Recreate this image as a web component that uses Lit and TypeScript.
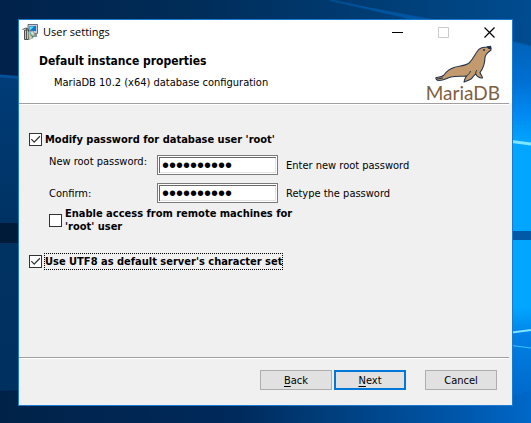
import { LitElement, html, css, svg } from "lit";
import { customElement } from "lit/decorators.js";

/** Blue desktop with light beams from a window on the right. */
const wallpaper = html`
  <svg class="wallpaper" viewBox="0 0 531 423" preserveAspectRatio="none" aria-hidden="true">
    <defs>
      <linearGradient id="top" x1="0" x2="1" y1="0" y2="0">
        <stop offset="0" stop-color="#00224a" />
        <stop offset="0.35" stop-color="#002c58" />
        <stop offset="0.75" stop-color="#003f78" />
        <stop offset="1" stop-color="#004c90" />
      </linearGradient>
      <linearGradient id="bottom" x1="0" x2="1" y1="0" y2="0">
        <stop offset="0" stop-color="#002248" />
        <stop offset="0.45" stop-color="#002a5c" />
        <stop offset="0.6" stop-color="#003c78" />
        <stop offset="0.85" stop-color="#0055a8" />
        <stop offset="1" stop-color="#0068c8" />
      </linearGradient>
      <linearGradient id="left" x1="0" x2="0" y1="0" y2="1">
        <stop offset="0" stop-color="#003c78" />
        <stop offset="0.5" stop-color="#003262" />
        <stop offset="1" stop-color="#003060" />
      </linearGradient>
      <linearGradient id="right" x1="0" x2="0" y1="0" y2="1">
        <stop offset="0" stop-color="#004c90" />
        <stop offset="0.1" stop-color="#0062b8" />
        <stop offset="0.2" stop-color="#006fd2" />
        <stop offset="0.28" stop-color="#0088f0" />
        <stop offset="0.36" stop-color="#00a6ff" />
        <stop offset="0.77" stop-color="#00a6ff" />
        <stop offset="0.84" stop-color="#0080e6" />
        <stop offset="1" stop-color="#0068c8" />
      </linearGradient>
    </defs>
    <rect width="531" height="211" fill="url(#top)" />
    <rect y="211" width="531" height="212" fill="url(#bottom)" />
    <path d="M0 76 L100 84 V385 L0 391Z" fill="url(#left)" />
    <path d="M0 76 L100 84" stroke="#00509a" stroke-width="3" />
    <path d="M330 0 L531 46 V390 L500 400 V32Z" fill="url(#right)" />
    <path d="M330 0 L531 46" stroke="#005faf" stroke-width="2" opacity="0.5" />
    <path d="M500 128 L531 125" stroke="#009cf0" stroke-width="1" />
    <path d="M500 140 L531 144" stroke="#7fe6ff" stroke-width="3" />
    <path d="M500 334 L531 330" stroke="#7fe6ff" stroke-width="2" />
    <path d="M500 344 L531 348" stroke="#38c4ff" stroke-width="1" />
    <path d="M0 223 H40 V243 H0Z" fill="#001b3a" />
    <path d="M500 231 H531 V240 H500Z" fill="#005aa8" />
  </svg>
`;

const installerIcon = html`
  <svg class="app-icon" viewBox="0 0 16 16" aria-hidden="true">
    <path d="M6 0.5H15.5V9.5H12L6 8Z" fill="#c3cbd6" stroke="#66707e" />
    <path d="M7.5 2H14V7H7.5Z" fill="#0b78cf" />
    <path d="M8 2.5H12L8 6.5Z" fill="#65d6f5" />
    <path d="M10 9.5H15V13H11Z" fill="#8b929c" />
    <path d="M2.500 6H6.500V15.500H2.500Z" fill="#c4c4b8" stroke="#4e5050" />
    <path d="M0.500 5.500L4 4L7 5.500M4.500 4V15" fill="none" stroke="#55574f" />
    <path d="M6.500 8L11 7L12.500 10L11 14L7 15.500Z" fill="#d5ddcf" stroke="#8a9086" stroke-width="0.7" />
    <path d="M9 11L7 9L9 8Z" fill="#49b7a9" />
    <path d="M9 11L12 12L10 14Z" fill="#358f70" />
    <path d="M9 11L7 13L8 14.500Z" fill="#e1c74c" />
    <circle cx="9" cy="11" r="0.8" fill="#fff" stroke="#555" stroke-width="0.5" />
  </svg>
`;

const seaLion = html`
  <svg class="sea-lion" viewBox="0 0 58 38" aria-hidden="true">
    <path
      d="M2 32.500C4 32 7 32.500 9.500 30.500C12 27 15 24 20 22.500C25 21 31 21 35 18C39 14.500 40.500 10 43.500 6C45.500 3 48.500 2 52 2.200L56.500 1.500L57 5C54.500 7 51.500 8.500 51 12.500C50.800 18 49.500 23 46 27.500C46.500 29.500 48.500 31 48.500 33C46 33.300 43.500 32 41.800 29.300C40 29.500 39.500 32 37 34C35 35.300 32.500 36 30 37C30.300 34.500 31.500 32.500 32.500 31C27 31.500 22 31 17 32C13 33 10 35.500 5 35.500C2.500 35.500 1.500 33.500 2 32.500Z"
      fill="#c39a6d"
      stroke="#26354a"
      stroke-width="1.100"
      stroke-linejoin="round"
    />
    <path d="M52.500 1.500L57 0.800L57.500 4L54.500 4Z" fill="#1f3048" />
    <circle cx="50" cy="5" r="0.9" fill="#1f2430" />
    <path d="M32.500 31C34.500 29.500 36 28 36.500 26M41.800 29.300C41.500 27.500 42 26 43 25M3 34L9 33" fill="none" stroke="#26354a" />
  </svg>
`;

const glyph = (shape: unknown) =>
  html`<svg width="11" height="11" viewBox="0 0 11 11" fill="none" stroke="currentColor" aria-hidden="true">${shape}</svg>`;

@customElement("app-root")
export class AppRoot extends LitElement {
  static styles = css`
    :host {
      display: grid;
      position: relative;
      box-sizing: border-box;
      min-height: 100vh;
      padding: 19px 18px 17px;
      overflow: hidden;
      background: #002c58;
      color: #000;
      font: 11px/13px "DejaVu Sans Condensed", Tahoma, sans-serif;
    }
    * {
      box-sizing: border-box;
    }
    .wallpaper {
      position: absolute;
      inset: 0;
      width: 100%;
      height: 100%;
    }
    .window {
      position: relative;
      display: flex;
      flex-direction: column;
      border: 1px solid #1a7ad2;
      background: #f0f0f0;
    }
    .banner {
      background: #fff;
    }
    .titlebar {
      display: flex;
      align-items: center;
      height: 24px;
      padding-left: 3px;
      gap: 5px;
      font: 11px/16px "Open Sans", "Segoe UI", sans-serif;
    }
    .app-icon {
      width: 16px;
      height: 16px;
    }
    .title {
      flex: 1;
    }
    .controls {
      display: flex;
    }
    .control {
      display: grid;
      place-items: center;
      width: 46px;
      height: 24px;
      padding: 0;
      border: 0;
      background: none;
      color: #000;
    }
    .control:disabled {
      color: #ccc;
    }
    .heading {
      display: flex;
      justify-content: space-between;
      height: 59px;
      padding: 0 12px 0 20px;
    }
    h1 {
      margin: 10px 0 7px;
      font-size: 12px;
      line-height: 15px;
    }
    .subtitle {
      margin: 0 0 0 15px;
    }
    .logo {
      display: flex;
      flex-direction: column;
      align-items: center;
      padding-top: 1px;
      color: #80603f;
      font: 400 19px/20px Lato, sans-serif;
    }
    .sea-lion {
      width: 58px;
      height: 38px;
    }
    .rule {
      height: 2px;
      margin: 0 3px 0 0;
      border: 0;
      border-top: 1px solid #a0a0a0;
      border-bottom: 1px solid #fff;
    }
    .form {
      flex: 1;
      padding: 26px 10px;
    }
    .check {
      display: flex;
      align-items: center;
      gap: 2px;
      width: fit-content;
      font-weight: bold;
    }
    .check label {
      padding: 1px 0;
      border: 1px dotted transparent;
    }
    .check label.focused {
      border-color: #000;
    }
    .box {
      appearance: none;
      display: grid;
      flex: none;
      width: 13px;
      height: 13px;
      margin: 0;
      border: 1px solid #333;
      background: #fff;
    }
    .box:checked::before {
      content: "";
      background: #333;
      clip-path: polygon(8% 51%, 16% 43%, 38% 65%, 86% 16%, 94% 25%, 38% 81%);
    }
    .remote {
      margin: 3px 0 19px 20px;
    }
    .remote label {
      max-width: 240px;
      padding: 0;
    }
    .fields {
      display: grid;
      grid-template-columns: 108px 121px 1fr;
      row-gap: 8px;
      align-items: center;
      padding: 7px 0 0 20px;
    }
    .fields label:first-child {
      align-self: start;
    }
    .password {
      width: 100%;
      height: 20px;
      padding: 0 4px;
      border: 1px solid #7a7a7a;
      outline: 0;
      background: #fff;
      box-shadow: inset 0 0 0 1px #fff, inset 2px 2px 0 #696969, inset -2px -2px 0 #e3e3e3;
      color: #000;
      font: 20px/16px "Liberation Sans", sans-serif;
    }
    .hint {
      padding-left: 8px;
    }
    .footer {
      display: flex;
      justify-content: flex-end;
      gap: 2px;
      padding: 11px 15px 15px;
    }
    .button {
      width: 72px;
      height: 20px;
      padding: 0;
      border: 1px solid #adadad;
      background: #e1e1e1;
      color: #000;
      font: inherit;
    }
    .button.primary {
      border: 2px solid #0078d7;
    }
    .button.cancel {
      margin-left: 17px;
    }
    u {
      text-underline-offset: 2px;
    }
  `;

  render() {
    return html`
      ${wallpaper}
      <main class="window">
        <header class="banner">
          <div class="titlebar">
            ${installerIcon}
            <span class="title">User settings</span>
            <div class="controls">
              <button class="control" aria-label="Minimize">${glyph(svg`<path d="M0 5.5H11" />`)}</button>
              <button class="control" aria-label="Maximize" disabled>
                ${glyph(svg`<path d="M0.5 0.5H10.5V10.5H0.5Z" />`)}
              </button>
              <button class="control" aria-label="Close">${glyph(svg`<path d="M0.5 0.5L10.5 10.5M10.5 0.5L0.5 10.5" stroke-width="1.2" />`)}</button>
            </div>
          </div>
          <div class="heading">
            <div>
              <h1>Default instance properties</h1>
              <p class="subtitle">MariaDB 10.2 (x64) database configuration</p>
            </div>
            <div class="logo">${seaLion}<span>MariaDB</span></div>
          </div>
        </header>
        <hr class="rule" />
        <form class="form" @submit=${(e: Event) => e.preventDefault()}>
          <div class="check">
            <input class="box" type="checkbox" id="modify" checked />
            <label for="modify">Modify password for database user 'root'</label>
          </div>
          <div class="fields">
            <label for="password">New root password:</label>
            <input class="password" type="password" id="password" value="rootsecret" aria-describedby="password-hint" />
            <span class="hint" id="password-hint">Enter new root password</span>
            <label for="confirm">Confirm:</label>
            <input class="password" type="password" id="confirm" value="rootsecret" aria-describedby="confirm-hint" />
            <span class="hint" id="confirm-hint">Retype the password</span>
          </div>
          <div class="check remote">
            <input class="box" type="checkbox" id="remote" />
            <label for="remote">Enable access from remote machines for 'root' user</label>
          </div>
          <div class="check">
            <input class="box" type="checkbox" id="utf8" checked />
            <label class="focused" for="utf8">Use UTF8 as default server's character set</label>
          </div>
        </form>
        <hr class="rule" />
        <footer class="footer">
          <button class="button"><u>B</u>ack</button>
          <button class="button primary"><u>N</u>ext</button>
          <button class="button cancel">Cancel</button>
        </footer>
      </main>
    `;
  }
}
